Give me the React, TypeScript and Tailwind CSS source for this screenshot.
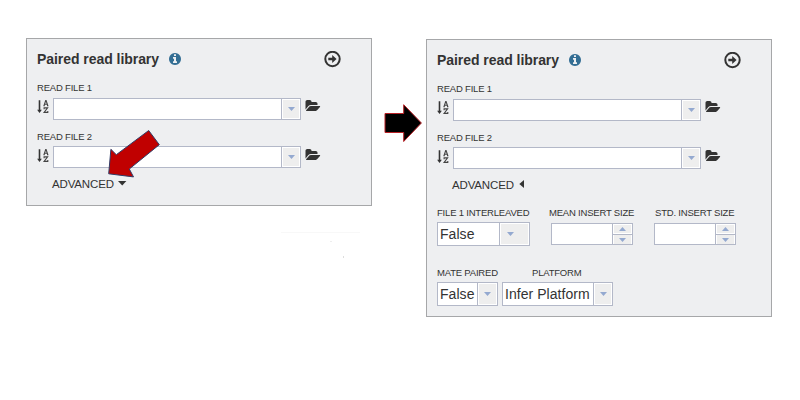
import React from 'react';

const FONT = "font-['Liberation_Sans',Arial,sans-serif]";

function InfoIcon() {
  return (
    <svg className="h-[14px] w-[14px] fill-[#336e94]" viewBox="0 0 1792 1792">
      <path d="M1152 1376v-160q0-14-9-23t-23-9h-96v-512q0-14-9-23t-23-9h-320q-14 0-23 9t-9 23v160q0 14 9 23t23 9h96v320h-96q-14 0-23 9t-9 23v160q0 14 9 23t23 9h448q14 0 23-9t9-23zm-128-896v-160q0-14-9-23t-23-9h-192q-14 0-23 9t-9 23v160q0 14 9 23t23 9h192q14 0 23-9t9-23zm640 416q0 209-103 385.5t-279.5 279.5-385.5 103-385.5-103-279.5-279.5-103-385.5 103-385.5 279.5-279.5 385.5-103 385.5 103 279.5 279.5 103 385.5z" />
    </svg>
  );
}

function CircleArrowIcon() {
  return (
    <svg className="h-[17px] w-[17px]" viewBox="0 0.5 17 17">
      <circle cx="8.5" cy="8.5" r="7.2" fill="none" stroke="#333" strokeWidth="2" />
      <path d="M4.3 7.3H8.2V4.6L12.6 8.5L8.2 12.4V9.7H4.3Z" fill="#333" />
    </svg>
  );
}

function FolderIcon() {
  return (
    <svg className="h-[14px] w-[16px] fill-[#333]" viewBox="0 0 1920 1792">
      <path d="M1879 952q0 31-31 66l-336 396q-43 51-120.5 86.5t-143.5 35.5h-1088q-34 0-60.5-13t-26.5-43q0-31 31-66l336-396q43-51 120.5-86.5t143.5-35.5h1088q34 0 60.5 13t26.5 43zm-343-344v160h-832q-94 0-197 47.5t-164 119.5l-337 396-5 6q0-4-.5-12.5t-.5-12.5v-960q0-92 66-158t158-66h320q92 0 158 66t66 158v32h544q92 0 158 66t66 158z" />
    </svg>
  );
}

function SortIcon() {
  return (
    <svg className="h-[14px] w-[12px]" viewBox="0 0 12 14">
      <path d="M1.7 0.2H3.3V9.8H4.9L2.5 13L0.1 9.8H1.7Z" fill="#333" />
      <g fill="none" stroke="#444" strokeWidth="1.1">
        <path d="M6.9 6L8.7 0.6H9.1L10.9 6M7.6 4.2H10.2M6.4 5.6H7.8M10 5.6H11.4" />
        <path d="M7.1 9.2V7.9H10.6L7.1 12.4H10.8V11.1" />
      </g>
    </svg>
  );
}

function Down() {
  return (
    <svg className="h-[4px] w-[7px] fill-[#94a9d0]" viewBox="0 0 7 4">
      <path d="M0 0H7L3.5 4Z" />
    </svg>
  );
}

function Up() {
  return (
    <svg className="h-[4px] w-[7px] fill-[#94a9d0]" viewBox="0 0 7 4">
      <path d="M0 4H7L3.5 0Z" />
    </svg>
  );
}

function Select({ size, button, inner = '', text }: { size: string; button: string; inner?: string; text?: string }) {
  return (
    <div className={`flex border border-[#b3b8c8] bg-white ${size}`}>
      <div className="flex-1 pt-[3px] pl-[2px] text-[14px] leading-[16px] tracking-[0.05px] whitespace-nowrap text-[#333]">{text}</div>
      <div className={`border-l border-[#b3b8c8] p-px ${button}`}>
        <div className={`flex h-full items-center justify-center bg-[#eeeeee] ${inner}`}>
          <Down />
        </div>
      </div>
    </div>
  );
}

function Spinner() {
  return (
    <div className="flex h-[22px] w-[82px] border border-[#b3b8c8] bg-white">
      <div className="flex-1" />
      <div className="flex w-[20px] flex-col border-l border-[#b3b8c8]">
        <div className="flex h-[10px] items-center justify-center border border-white bg-[#eeeeee]"><Up /></div>
        <div className="border-t border-[#b3b8c8] bg-white px-px">
          <div className="flex h-[9px] items-center justify-center bg-[#eeeeee]"><Down /></div>
        </div>
      </div>
    </div>
  );
}

function Label({ children, className = '' }: { children: React.ReactNode; className?: string }) {
  return <div className={`text-[9.5px] leading-[10px] tracking-[-0.2px] whitespace-nowrap text-[#333] ${className}`}>{children}</div>;
}

function FileRow({ iconPad, folderPad }: { iconPad: string; folderPad: string }) {
  return (
    <div className="flex h-[22px]">
      <div className={`w-[16px] ${iconPad}`}><SortIcon /></div>
      <Select size="h-[22px] w-[248px]" button="w-[19px]" />
      <div className={`pl-[4px] ${folderPad}`}><FolderIcon /></div>
    </div>
  );
}

function Panel({ open, className }: { open: boolean; className: string }) {
  return (
    <section className={`w-[346px] border border-[#a6a7a9] bg-[#eeeff1] pl-[10px] text-[#333] ${className}`}>
      <header className="flex h-[44px] pt-[12px]">
        <h2 className="w-[131px] text-[14px] leading-[16px] font-bold tracking-[-0.05px] whitespace-nowrap">Paired read library</h2>
        <div className="w-[156px] pt-px"><InfoIcon /></div>
        <CircleArrowIcon />
      </header>
      <Label className="h-[15px]">READ FILE 1</Label>
      <FileRow iconPad="pt-[2px]" folderPad="pt-px" />
      <Label className="mt-[12px] h-[14px]">READ FILE 2</Label>
      <FileRow iconPad="pt-[3px]" folderPad="pt-[2px]" />
      <div className="mt-[9px] flex h-[14px] pl-[15px]">
        <span className="w-[66px] text-[11.5px] leading-[14px] tracking-[-0.15px]">ADVANCED</span>
        {open ? (
          <svg className="mt-[2px] ml-px h-[8px] w-[5px] fill-[#333]" viewBox="0 0 5 8"><path d="M5 0V8L0.3 4Z" /></svg>
        ) : (
          <svg className="mt-[4px] h-[5px] w-[9px] fill-[#333]" viewBox="0 0 9 5"><path d="M0 0H8.4L4.2 4.6Z" /></svg>
        )}
      </div>
      {open && (
        <>
          <div className="mt-[16px] flex">
            <div className="w-[112px]">
              <Label className="mb-[4px]">FILE 1 INTERLEAVED</Label>
              <Select size="h-[24px] w-[93px]" button="w-[30px]" inner="pr-[9px]" text="False" />
            </div>
            <div className="w-[106px]">
              <Label className="mb-[5px]">MEAN INSERT SIZE</Label>
              <div className="pl-[2px]"><Spinner /></div>
            </div>
            <div className="-ml-px">
              <Label className="mb-[5px] pl-px">STD. INSERT SIZE</Label>
              <Spinner />
            </div>
          </div>
          <div className="mt-[22px] flex gap-[4px]">
            <div>
              <Label className="mb-[4px]">MATE PAIRED</Label>
              <Select size="h-[24px] w-[61px]" button="w-[20px]" text="False" />
            </div>
            <div>
              <Label className="mb-[4px] pl-[30px]">PLATFORM</Label>
              <Select size="h-[24px] w-[111px]" button="w-[19px]" text="Infer Platform" />
            </div>
          </div>
        </>
      )}
    </section>
  );
}

export default function App() {
  return (
    <main className={`relative flex h-[400px] w-[800px] items-start gap-[54px] overflow-hidden bg-white pl-[26px] ${FONT}`}>
      <Panel open={false} className="mt-[38px] h-[168px]" />
      <Panel open className="mt-[39px] h-[278px]" />
      <svg className="pointer-events-none absolute inset-0 h-[400px] w-[800px]" viewBox="0 0 800 400">
        <path d="M148.7 130.5L159.3 144.7L129.3 169L133.5 176.9L108.7 173.8L110.9 149.3L116.3 154.7Z" fill="#c00000" stroke="#2f3d68" strokeWidth="1" />
        <path d="M385 113.5H403.7V104.7L421.4 123L403.7 141.5V132.5H385Z" fill="#000" stroke="#b82025" strokeWidth="1" />
        <path d="M281 232.5H360" stroke="#f8f8f8" />
        <path d="M330 241.5H332" stroke="#eeeeee" />
        <path d="M343.5 256V258" stroke="#dddddd" />
      </svg>
    </main>
  );
}
